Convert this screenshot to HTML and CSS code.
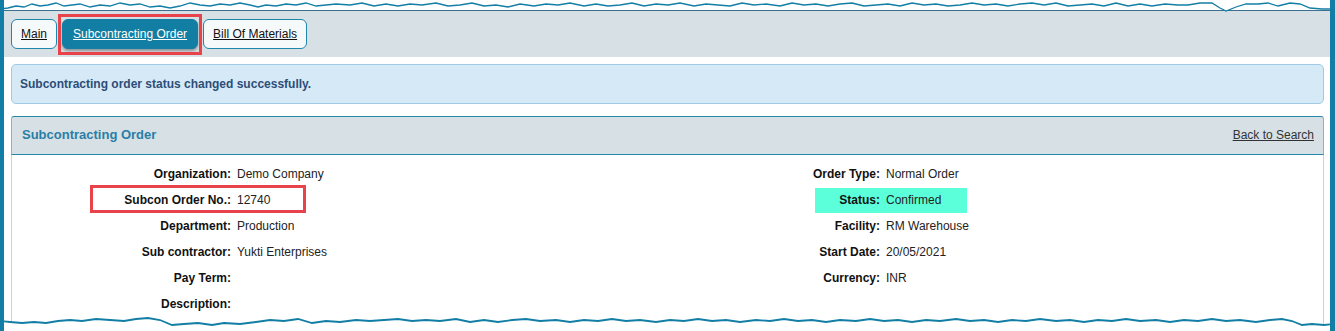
FILE: index.html
```html
<!doctype html>
<html>
<head>
	<title>Subcontracting Order</title>
	<meta name="viewport" content="width=device-width, initial-scale=1">
	<link rel="stylesheet" href="styles.css">
</head>
<body>
	<div class="sheet">
		<nav class="tabbar">
			<a class="tab" href="#">Main</a>
			<a class="tab active" href="#">Subcontracting Order</a>
			<a class="tab" href="#">Bill Of Materials</a>
		</nav>
		<main class="content">
			<div class="alert">Subcontracting order status changed successfully.</div>
			<section class="panel">
				<header class="panel-head">
					<h2>Subcontracting Order</h2>
					<a href="#">Back to Search</a>
				</header>
				<div class="fields">
					<div class="row">
						<span class="label c1">Organization:</span><span class="value c2">Demo Company</span>
						<span class="label c3">Order Type:</span><span class="value c4">Normal Order</span>
					</div>
					<div class="row">
						<div class="status-mark"></div>
						<div class="red-mark"></div>
						<span class="label c1">Subcon Order No.:</span><span class="value c2">12740</span>
						<span class="label c3">Status:</span><span class="value c4">Confirmed</span>
					</div>
					<div class="row">
						<span class="label c1">Department:</span><span class="value c2">Production</span>
						<span class="label c3">Facility:</span><span class="value c4">RM Warehouse</span>
					</div>
					<div class="row">
						<span class="label c1">Sub contractor:</span><span class="value c2">Yukti Enterprises</span>
						<span class="label c3">Start Date:</span><span class="value c4">20/05/2021</span>
					</div>
					<div class="row">
						<span class="label c1">Pay Term:</span><span class="value c2"></span>
						<span class="label c3">Currency:</span><span class="value c4">INR</span>
					</div>
					<div class="row">
						<span class="label c1">Description:</span><span class="value c2"></span>
					</div>
				</div>
			</section>
		</main>

		<!-- torn paper edges -->
		<svg class="tear top" width="1335" height="14" viewBox="0 0 1335 14">
			<polygon fill="#fff" points="0,0 1335,0 1335,9 1322,9 1310,8 1300,4 1290,3 1278,6 1268,3 1258,4 1246,4 1236,7 1226,11 1220,8 1212,3 1200,3 1188,5 1178,5 1165,4 1152,6 1140,4 1128,6 1115,3 1104,6 1092,4 1080,5 1068,6 1058,3 1046,5 1036,3 1026,6 1016,5 1005,6 0,6"/>
			<polyline fill="none" stroke="#137ea5" stroke-width="1.3" points="0,9 8,8 16,6 24,7 32,4 40,6 48,5 56,3 64,6 72,5 80,4 90,7 100,5 110,6 120,3 130,5 140,4 150,7 160,6 170,8 180,6 190,3 200,5 210,6 220,4 230,5 240,3 250,5 258,7 266,5 276,6 286,4 296,5 306,3 316,6 326,5 336,4 350,5 362,3 374,6 386,4 398,6 410,4 422,5 436,3 448,6 460,5 472,3 484,6 496,5 508,7 520,4 534,6 546,4 558,5 570,3 584,6 596,4 608,6 620,5 632,3 644,6 656,4 668,5 680,3 694,6 706,4 718,5 730,6 742,3 754,5 766,4 780,6 792,3 804,5 816,4 828,6 840,4 852,3 864,6 876,5 888,4 900,6 912,3 924,5 936,4 948,6 960,5 972,3 984,5 996,4 1008,6 1020,4 1032,3 1044,5 1056,3 1068,6 1080,5 1092,4 1104,6 1116,3 1128,6 1140,4 1152,6 1165,4 1178,5 1188,5 1200,3 1212,3 1220,8 1226,11 1236,7 1246,4 1258,4 1268,3 1278,6 1290,3 1300,4 1310,8 1322,9 1335,9"/>
		</svg>
		<svg class="tear bottom" width="1335" height="14" viewBox="0 0 1335 14">
			<polygon fill="#fff" points="0,14 0,4 10,5 22,6 34,5 46,6 58,4 70,3 82,4 96,2 110,3 124,4 136,2 148,1 160,3 172,8 184,7 198,6 212,8 224,6 240,7 256,5 270,3 284,4 298,2 312,6 326,4 340,5 356,3 370,4 384,3 398,2 412,4 426,3 440,4 456,2 470,5 484,3 498,5 512,3 526,2 540,4 556,3 570,5 584,3 598,4 612,2 626,4 640,3 656,5 670,3 684,4 698,2 712,4 726,3 740,5 756,3 770,4 784,2 798,4 812,3 826,5 840,3 856,4 870,2 884,4 898,3 912,5 926,3 940,4 956,2 970,4 984,3 998,5 1012,3 1026,4 1040,2 1056,4 1070,3 1084,5 1098,3 1112,4 1126,2 1140,4 1156,3 1170,5 1184,3 1198,4 1212,2 1226,4 1240,3 1256,5 1270,3 1282,2 1292,4 1302,8 1312,7 1324,8 1335,7 1335,14"/>
			<polyline fill="none" stroke="#137ea5" stroke-width="1.8" points="0,4 10,5 22,6 34,5 46,6 58,4 70,3 82,4 96,2 110,3 124,4 136,2 148,1 160,3 172,8 184,7 198,6 212,8 224,6 240,7 256,5 270,3 284,4 298,2 312,6 326,4 340,5 356,3 370,4 384,3 398,2 412,4 426,3 440,4 456,2 470,5 484,3 498,5 512,3 526,2 540,4 556,3 570,5 584,3 598,4 612,2 626,4 640,3 656,5 670,3 684,4 698,2 712,4 726,3 740,5 756,3 770,4 784,2 798,4 812,3 826,5 840,3 856,4 870,2 884,4 898,3 912,5 926,3 940,4 956,2 970,4 984,3 998,5 1012,3 1026,4 1040,2 1056,4 1070,3 1084,5 1098,3 1112,4 1126,2 1140,4 1156,3 1170,5 1184,3 1198,4 1212,2 1226,4 1240,3 1256,5 1270,3 1282,2 1292,4 1302,8 1312,7 1324,8 1335,7"/>
		</svg>
	</div>
</body>
</html>
```

FILE: styles.css
```css
* {
	box-sizing: border-box;
}
body {
	margin: 0;
	background: #fff;
	font-family: 'Liberation Sans', Arial, sans-serif;
	font-size: 12px;
	color: #222;
}
.sheet {
	position: relative;
	width: 1335px;
	height: 331px;
	overflow: hidden;
	padding-top: 10px;
	border-left: 4px solid #137ea5;
	border-right: 5px solid #137ea5;
}

/* tabs */
.tabbar {
	display: flex;
	gap: 5px;
	height: 47px;
	padding: 8px 0 0 7px;
	background: #d7e0e5;
	border-top: 1px solid #3d6f8e;
}
.tab {
	position: relative;
	height: 30px;
	line-height: 28px;
	padding: 0 9px;
	border: 1px solid #1f86ab;
	border-radius: 6px;
	background: #f6f9fa;
	color: #111;
	text-decoration: underline;
}
.tab.active {
	padding: 0 10px;
	background: #137ea3;
	border-color: #137ea3;
	color: #fff;
	box-shadow: 0 2px 3px rgba(0, 0, 0, 0.35);
}
.tab.active::after {
	content: '';
	position: absolute;
	inset: -6px -5px -7px -5px;
	border: 3px solid #e8434a;
}

/* content */
.content {
	padding: 7px 6px 0 7px;
}
.alert {
	height: 40px;
	line-height: 38px;
	padding-left: 8px;
	background: #d5eaf6;
	border: 1px solid #9fcbe4;
	border-radius: 5px;
	color: #2e4d78;
	font-weight: bold;
}
.panel {
	margin-top: 12px;
}
.panel-head {
	display: flex;
	align-items: center;
	justify-content: space-between;
	height: 39px;
	padding: 0 9px 2px 10px;
	background: #d7e0e5;
	border: 1px solid #2888ac;
	border-left-color: #8fb3c4;
	border-right-color: #8fb3c4;
	border-radius: 3px 3px 0 0;
}
.panel-head h2 {
	margin: 0;
	font-size: 13px;
	color: #2a7ea6;
}
.panel-head a {
	color: #333;
	text-decoration: underline;
}
.fields {
	padding-top: 6px;
	height: 200px;
	border: 1px solid #d2d2d2;
	border-top: none;
}
.row {
	display: grid;
	grid-template-columns: 219px 431px 206px 1fr;
	column-gap: 6px;
	height: 26px;
	align-items: center;
}
.row > * {
	grid-row: 1;
}
.c1 { grid-column: 1; }
.c2 { grid-column: 2; }
.c3 { grid-column: 3; }
.c4 { grid-column: 4; }
.label {
	text-align: right;
	font-weight: bold;
	color: #111;
}
.value {
	color: #222;
}
.status-mark {
	grid-column: 3 / 5;
	align-self: start;
	margin: 1px 0 0 141px;
	width: 152px;
	height: 25px;
	background: #5bffda;
}
.red-mark {
	grid-column: 1 / 3;
	align-self: start;
	margin: -2px 0 0 78px;
	width: 216px;
	height: 28px;
	border: 3px solid #e8434a;
}

/* torn edges lie over the page */
.tear {
	position: absolute;
	left: -4px;
	display: block;
}
.tear.top {
	top: 0;
}
.tear.bottom {
	bottom: 0;
}
```
